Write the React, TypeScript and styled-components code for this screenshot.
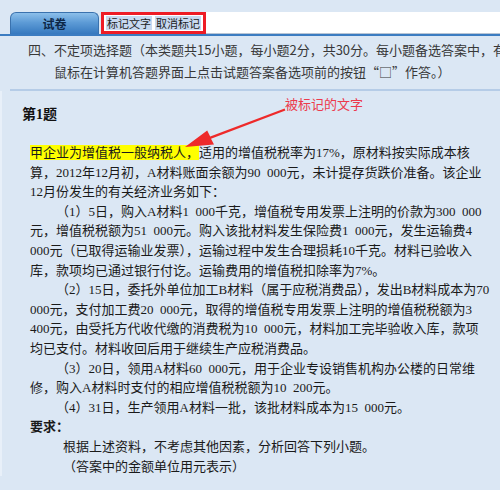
import React from 'react'
import styled, { createGlobalStyle } from 'styled-components'

const GlobalStyle = createGlobalStyle`
  html, body {
    margin: 0;
    padding: 0;
    background: #dbe7f4;
  }
`

const Page = styled.div`
  position: relative;
  width: 500px;
  height: 490px;
  overflow: hidden;
  background: #dbe7f4;
  font-family: "Noto Sans CJK SC", sans-serif;
`

const TabBar = styled.div`
  display: flex;
  align-items: flex-end;
  padding: 12px 0 0 10px;
  border-bottom: 2px solid #3b7cc1;
`

const Tab = styled.div`
  width: 89px;
  height: 22px;
  box-sizing: border-box;
  display: flex;
  align-items: center;
  justify-content: center;
  border: 1px solid #3a72ae;
  border-bottom: none;
  border-radius: 6px 6px 0 0;
  background: linear-gradient(#8cbfea 0%, #5d9bd6 45%, #3679bf 100%);
  color: #0e2747;
  font-size: 12px;
  font-weight: bold;
`

const MarkBox = styled.div`
  display: flex;
  align-items: center;
  gap: 3px;
  height: 22px;
  box-sizing: border-box;
  margin-left: 2px;
  padding: 0 2px;
  border: 3px solid #ee1c25;
  background: #ffffff;
`

const MarkButton = styled.div`
  height: 14px;
  line-height: 14px;
  padding: 0 1px;
  background: #c8d9f0;
  color: #1c1c1c;
  font-size: 11px;
`

const TabFill = styled.div`
  flex: 1;
  height: 21px;
  background: #ffffff;
  border-bottom: 1px solid #b8c5d4;
`

const Header = styled.div`
  padding-top: 3px;
  color: #383838;
  font-size: 13px;
  line-height: 22px;
  white-space: nowrap;
`

const HeaderLine = styled.div<{ $indent: number }>`
  padding-left: ${p => p.$indent}px;
`

const Divider = styled.div`
  height: 2px;
  margin: 6px 0 0 10px;
  background: #b5cce7;
`

const Content = styled.div`
  border-left: 2px solid #e8f0f9;
  padding: 14px 0 0 20px;
  color: #1a1a1a;
  font-family: "Liberation Serif", "Noto Sans CJK SC", serif;
`

const QuestionTitle = styled.div`
  font-size: 14px;
  line-height: 20px;
  font-weight: bold;
  color: #111;
`

const Para = styled.div`
  margin-top: 18px;
  padding-left: 8px;
  font-size: 13px;
  line-height: 19.6px;
  white-space: nowrap;
`

const Line = styled.div<{ $indent?: number; $bold?: boolean }>`
  padding-left: ${p => p.$indent ?? 0}px;
  font-weight: ${p => (p.$bold ? 'bold' : 'normal')};
`

const Highlight = styled.span`
  display: inline-block;
  line-height: 15px;
  background: #ffff00;
`

const Callout = styled.span`
  position: absolute;
  left: 285px;
  top: 95px;
  color: #ec3a4c;
  font-size: 13px;
  line-height: 18px;
  font-family: "Noto Sans CJK SC", sans-serif;
`

const ArrowLayer = styled.svg`
  position: absolute;
  left: 0;
  top: 0;
  pointer-events: none;
`

const S = '\u2002'

export default function App() {
  return (
    <Page>
      <GlobalStyle />
      <TabBar>
        <Tab>试卷</Tab>
        <MarkBox>
          <MarkButton>标记文字</MarkButton>
          <MarkButton>取消标记</MarkButton>
        </MarkBox>
        <TabFill />
      </TabBar>
      <Header>
        <HeaderLine $indent={28}>四、不定项选择题（本类题共15小题，每小题2分，共30分。每小题备选答案中，有</HeaderLine>
        <HeaderLine $indent={54}>鼠标在计算机答题界面上点击试题答案备选项前的按钮“□”作答。）</HeaderLine>
      </Header>
      <Divider />
      <Content>
        <QuestionTitle>第1题</QuestionTitle>
        <Para>
          <Line><Highlight>甲企业为增值税一般纳税人，</Highlight>适用的增值税税率为17%，原材料按实际成本核</Line>
          <Line>算，2012年12月初，A材料账面余额为90{S}000元，未计提存货跌价准备。该企业</Line>
          <Line>12月份发生的有关经济业务如下：</Line>
          <Line $indent={26}>（1）5日，购入A材料1{S}000千克，增值税专用发票上注明的价款为300{S}000</Line>
          <Line>元，增值税税额为51{S}000元。购入该批材料发生保险费1{S}000元，发生运输费4</Line>
          <Line>000元（已取得运输业发票），运输过程中发生合理损耗10千克。材料已验收入</Line>
          <Line>库，款项均已通过银行付讫。运输费用的增值税扣除率为7%。</Line>
          <Line $indent={26}>（2）15日，委托外单位加工B材料（属于应税消费品），发出B材料成本为70</Line>
          <Line>000元，支付加工费20{S}000元，取得的增值税专用发票上注明的增值税税额为3</Line>
          <Line>400元，由受托方代收代缴的消费税为10{S}000元，材料加工完毕验收入库，款项</Line>
          <Line>均已支付。材料收回后用于继续生产应税消费品。</Line>
          <Line $indent={26}>（3）20日，领用A材料60{S}000元，用于企业专设销售机构办公楼的日常维</Line>
          <Line>修，购入A材料时支付的相应增值税税额为10{S}200元。</Line>
          <Line $indent={26}>（4）31日，生产领用A材料一批，该批材料成本为15{S}000元。</Line>
          <Line $bold>要求：</Line>
          <Line $indent={33}>根据上述资料，不考虑其他因素，分析回答下列小题。</Line>
          <Line $indent={33}>（答案中的金额单位用元表示）</Line>
        </Para>
      </Content>
      <ArrowLayer width="500" height="490" viewBox="0 0 500 490">
        <polygon
          points="185,147 214,144.5 211,138.8 285.4,110.6 284.6,108.4 210.2,136.4 207.2,130.5"
          fill="#ee2a2a"
        />
      </ArrowLayer>
      <Callout>被标记的文字</Callout>
    </Page>
  )
}
